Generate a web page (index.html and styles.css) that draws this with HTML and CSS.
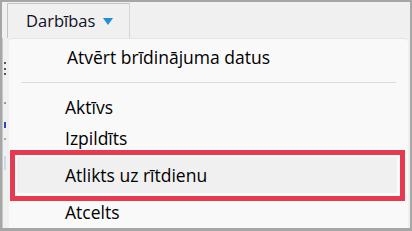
FILE: index.html
```html
<!DOCTYPE html>
<html lang="lv">
<head>
  <meta charset="UTF-8">
  <title>Darbības</title>
  <link rel="stylesheet" href="styles.css">
</head>
<body>

<div class="frame">
  <div class="topbar">
    <div class="tab">
      <span>Darbības</span>
      <span class="arrow"></span>
    </div>
  </div>

  <div class="main">
    <div class="side">
      <i class="tick t1"></i>
      <i class="tick t2"></i>
      <i class="tick t3"></i>
      <i class="tick t4"></i>
      <i class="tick t5 blue"></i>
      <i class="tick t6"></i>
      <i class="tick t7 light"></i>
    </div>

    <div class="menu">
      <div class="item first">Atvērt brīdinājuma datus</div>
      <div class="sep"></div>
      <div class="item">Aktīvs</div>
      <div class="item">Izpildīts</div>
      <div class="mark">
        <div class="item hover">Atlikts uz rītdienu</div>
      </div>
      <div class="item last">Atcelts</div>
    </div>
  </div>
</div>

</body>
</html>
```

FILE: styles.css
```css
body {
  margin: 0;
  padding: 0;
  background: #ffffff;
  font-family: "Open Sans", "Noto Sans", Arial, sans-serif;
}

.frame {
  width: 412px;
  height: 231px;
  box-sizing: border-box;
  border: 2px solid #a6a6a6;
  border-bottom-width: 3px;
  background: #f0f0f0;
  display: flex;
  flex-direction: column;
}

.topbar {
  height: 36px;
  padding-top: 1px;
  box-sizing: border-box;
  padding-left: 5px;
  display: flex;
}

.tab {
  width: 123px;
  border-top: 1px solid #c4c4c4;
  border-left: 1px solid #c4c4c4;
  border-right: 1px solid #d6d6d6;
  background: #f0f0f0;
  display: flex;
  align-items: center;
  padding-left: 18px;
  padding-bottom: 2px;
  box-sizing: border-box;
  font-size: 16.5px;
  color: #101024;
}

.arrow {
  width: 0;
  height: 0;
  margin-left: 8px;
  margin-top: 2px;
  border-left: 5px solid transparent;
  border-right: 5px solid transparent;
  border-top: 7px solid #1f8fd8;
}

.main {
  flex: 1;
  display: flex;
}

.side {
  width: 6px;
  position: relative;
  border-left: 1px solid #c8c8c8;
}

.tick {
  position: absolute;
  left: 1px;
  width: 2px;
  height: 2px;
  background: #555;
}

.t1 { top: 24px; }
.t2 { top: 30px; }
.t3 { top: 35px; }
.t4 { top: 64px; background: #999; }
.t5 { top: 84px; height: 6px; }
.t6 { top: 100px; background: #aaa; }
.t7 { top: 118px; height: 14px; }
.blue { background: #2a4bb0; }
.light { background: #c9dcef; }

.menu {
  flex: 1;
  margin-right: 2px;
  background: #f9f9f9;
  border-top: 1px solid #e4e4e4;
  border-radius: 4px 4px 0 0;
  padding-top: 3px;
  box-sizing: border-box;
  font-size: 17.5px;
  color: #000000;
}

.item {
  height: 30px;
  display: flex;
  align-items: center;
  padding-left: 56px;
}

.item.first {
  height: 30px;
  padding-left: 58px;
}

.sep {
  height: 1px;
  background: #dcdcdc;
  margin: 10px 12px 9px 12px;
}

.mark {
  margin: 0 3px 0 1px;
  border: 5px solid #e63a50;
  padding: 1px 2px 2px 1px;
}

.item.hover {
  height: 38px;
  padding-left: 49px;
  background: #f0f0f0;
  box-shadow: inset 0 0 0 1px #fbfbfb;
}

.item + .item {
  height: 28px;
  padding-top: 4px;
  box-sizing: border-box;
}

.item.last {
  height: 22px;
}
```
